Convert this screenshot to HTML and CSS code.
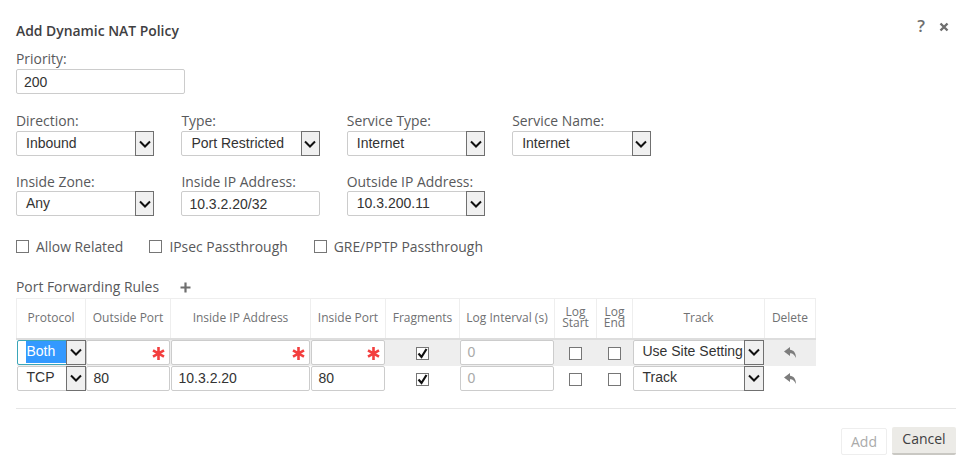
FILE: index.html
```html
<!DOCTYPE html>
<html lang="en">
<head>
  <meta charset="UTF-8">
  <title>Add Dynamic NAT Policy</title>
  <link rel="stylesheet" href="styles.css">
</head>
<body>
  <div class="dialog">
    <div class="head">
      <h1>Add Dynamic NAT Policy</h1>
      <div class="head-icons">
        <span class="help">?</span>
        <svg class="close" width="10" height="10" viewBox="0 0 10 10"><path d="M1.500 1.500l7 7M8.500 1.500l-7 7" stroke="#6f6f6f" stroke-width="2.400" fill="none"/></svg>
      </div>
    </div>

    <div class="row row-priority">
      <div class="field wide">
        <label>Priority:</label>
        <div class="input">200</div>
      </div>
    </div>

    <div class="row row-second">
      <div class="field">
        <label>Direction:</label>
        <div class="select"><span class="val">Inbound</span><span class="arrow"><svg width="12" height="8" viewBox="0 0 12 8"><path d="M1 1.500l5 5 5-5" stroke="#111" stroke-width="2" fill="none"/></svg></span></div>
      </div>
      <div class="field">
        <label>Type:</label>
        <div class="select"><span class="val">Port Restricted</span><span class="arrow"><svg width="12" height="8" viewBox="0 0 12 8"><path d="M1 1.500l5 5 5-5" stroke="#111" stroke-width="2" fill="none"/></svg></span></div>
      </div>
      <div class="field">
        <label>Service Type:</label>
        <div class="select"><span class="val">Internet</span><span class="arrow"><svg width="12" height="8" viewBox="0 0 12 8"><path d="M1 1.500l5 5 5-5" stroke="#111" stroke-width="2" fill="none"/></svg></span></div>
      </div>
      <div class="field">
        <label>Service Name:</label>
        <div class="select"><span class="val">Internet</span><span class="arrow"><svg width="12" height="8" viewBox="0 0 12 8"><path d="M1 1.500l5 5 5-5" stroke="#111" stroke-width="2" fill="none"/></svg></span></div>
      </div>
    </div>

    <div class="row row-third">
      <div class="field">
        <label>Inside Zone:</label>
        <div class="select"><span class="val">Any</span><span class="arrow"><svg width="12" height="8" viewBox="0 0 12 8"><path d="M1 1.500l5 5 5-5" stroke="#111" stroke-width="2" fill="none"/></svg></span></div>
      </div>
      <div class="field">
        <label>Inside IP Address:</label>
        <div class="input">10.3.2.20/32</div>
      </div>
      <div class="field">
        <label>Outside IP Address:</label>
        <div class="select"><span class="val">10.3.200.11</span><span class="arrow"><svg width="12" height="8" viewBox="0 0 12 8"><path d="M1 1.500l5 5 5-5" stroke="#111" stroke-width="2" fill="none"/></svg></span></div>
      </div>
    </div>

    <div class="checks">
      <div class="check-item"><span class="box"></span>Allow Related</div>
      <div class="check-item"><span class="box"></span>IPsec Passthrough</div>
      <div class="check-item"><span class="box"></span>GRE/PPTP Passthrough</div>
    </div>

    <div class="rules-title">
      <span>Port Forwarding Rules</span>
      <svg width="11" height="11" viewBox="0 0 11 11"><path d="M5.500 0.500v10M0.500 5.500h10" stroke="#6f6f6f" stroke-width="2.200" fill="none"/></svg>
    </div>

    <table class="rules">
      <colgroup>
        <col class="c-proto"><col class="c-oport"><col class="c-ip"><col class="c-iport"><col class="c-frag">
        <col class="c-int"><col class="c-ls"><col class="c-le"><col class="c-track"><col class="c-del">
      </colgroup>
      <thead>
        <tr>
          <th>Protocol</th><th>Outside Port</th><th>Inside IP Address</th><th>Inside Port</th><th>Fragments</th>
          <th>Log Interval (s)</th><th class="two">Log<br>Start</th><th class="two">Log<br>End</th><th>Track</th><th>Delete</th>
        </tr>
      </thead>
      <tbody>
        <tr class="active">
          <td><div class="select cell-select focus"><span class="val"><span class="picked">Both</span></span><span class="arrow"><svg width="12" height="8" viewBox="0 0 12 8"><path d="M1 1.500l5 5 5-5" stroke="#111" stroke-width="2" fill="none"/></svg></span></div></td>
          <td><div class="input cell-input"><svg class="req" width="13" height="13" viewBox="0 0 13 13"><path d="M6.500 0v13M1 3.300l11 6.400M12 3.300L1 9.700" stroke="#f33f3f" stroke-width="2.600" fill="none"/></svg></div></td>
          <td><div class="input cell-input"><svg class="req" width="13" height="13" viewBox="0 0 13 13"><path d="M6.500 0v13M1 3.300l11 6.400M12 3.300L1 9.700" stroke="#f33f3f" stroke-width="2.600" fill="none"/></svg></div></td>
          <td><div class="input cell-input"><svg class="req" width="13" height="13" viewBox="0 0 13 13"><path d="M6.500 0v13M1 3.300l11 6.400M12 3.300L1 9.700" stroke="#f33f3f" stroke-width="2.600" fill="none"/></svg></div></td>
          <td class="mid"><span class="box on"><svg width="13" height="13" viewBox="0 0 13 13"><path d="M2.500 6.500l3 3.500 5-8" stroke="#111" stroke-width="2.200" fill="none"/></svg></span></td>
          <td><div class="input cell-input off">0</div></td>
          <td class="mid"><span class="box"></span></td>
          <td class="mid"><span class="box"></span></td>
          <td><div class="select cell-select"><span class="val">Use Site Setting</span><span class="arrow"><svg width="12" height="8" viewBox="0 0 12 8"><path d="M1 1.500l5 5 5-5" stroke="#111" stroke-width="2" fill="none"/></svg></span></div></td>
          <td class="mid"><svg class="undo" width="12" height="11" viewBox="0 0 12 11"><path d="M6 0L0 4.500 6 9V6.200c2.500-.2 4.500 1.300 6 4.800 0-5-2.500-8-6-8.200z" fill="#7d7d7d"/></svg></td>
        </tr>
        <tr>
          <td><div class="select cell-select"><span class="val">TCP</span><span class="arrow"><svg width="12" height="8" viewBox="0 0 12 8"><path d="M1 1.500l5 5 5-5" stroke="#111" stroke-width="2" fill="none"/></svg></span></div></td>
          <td><div class="input cell-input">80</div></td>
          <td><div class="input cell-input">10.3.2.20</div></td>
          <td><div class="input cell-input">80</div></td>
          <td class="mid"><span class="box on"><svg width="13" height="13" viewBox="0 0 13 13"><path d="M2.500 6.500l3 3.500 5-8" stroke="#111" stroke-width="2.200" fill="none"/></svg></span></td>
          <td><div class="input cell-input off">0</div></td>
          <td class="mid"><span class="box"></span></td>
          <td class="mid"><span class="box"></span></td>
          <td><div class="select cell-select"><span class="val">Track</span><span class="arrow"><svg width="12" height="8" viewBox="0 0 12 8"><path d="M1 1.500l5 5 5-5" stroke="#111" stroke-width="2" fill="none"/></svg></span></div></td>
          <td class="mid"><svg class="undo" width="12" height="11" viewBox="0 0 12 11"><path d="M6 0L0 4.500 6 9V6.200c2.500-.2 4.500 1.300 6 4.800 0-5-2.500-8-6-8.200z" fill="#7d7d7d"/></svg></td>
        </tr>
      </tbody>
    </table>

    <div class="foot">
      <button class="btn-add">Add</button>
      <button class="btn-cancel">Cancel</button>
    </div>
  </div>
</body>
</html>
```

FILE: styles.css
```css
* { box-sizing: border-box; margin: 0; padding: 0; }
html, body { height: 100%; overflow: hidden; }
body {
  background: #fff;
  font-family: "Open Sans", Arial, sans-serif;
  font-size: 13.9px;
  color: #58595b;
}
.dialog { padding: 21px 15px 0 16px; }
.head {
  display: flex;
  justify-content: space-between;
  align-items: flex-start;
  height: 20px;
}
h1 {
  font-size: 13.9px;
  font-weight: 600;
  line-height: 20px;
  color: #3f4042;
}
.head-icons {
  display: flex;
  align-items: center;
  gap: 14px;
  margin-top: -4px;
  padding-right: 7px;
}
.help { font-size: 17px; font-weight: 600; line-height: 18px; color: #6f6f6f; }
.close { margin-top: 2px; }

.row { display: flex; gap: 27px; }
.row-priority { margin-top: 8px; }
.row-second { margin-top: 17px; }
.row-third { margin-top: 15px; }
.field { width: 138.4px; }
.field.wide { width: 169px; }
label { display: block; height: 20px; line-height: 19px; }
.row-third label { line-height: 21px; }

.input, .select {
  height: 25px;
  border: 1px solid #ccc;
  border-radius: 2px;
  background: #fff;
  font-family: "Liberation Sans", Arial, sans-serif;
  font-size: 14px;
  color: #333;
  line-height: 24px;
}
.input { padding-left: 7px; }
.select { display: flex; line-height: 23px; }
.select .val { flex: 1; padding-left: 9px; white-space: nowrap; overflow: hidden; }
.arrow {
  width: 19px;
  margin: -1px -1px -1px 0;
  display: flex;
  align-items: center;
  justify-content: center;
  background: #f0f0f0;
  border: 1px solid #707070;
}
.checks { display: flex; margin-top: 19px; height: 22px; align-items: center; }
.check-item { display: flex; align-items: center; margin-right: 26px; }
.box {
  display: inline-block;
  width: 13px;
  height: 13px;
  border: 1px solid #767676;
  background: #fff;
  vertical-align: middle;
}
.check-item .box { margin-right: 7px; }
.box.on { position: relative; }
.box.on svg { position: absolute; left: -1px; top: -1px; }

.rules-title {
  display: flex;
  align-items: center;
  gap: 21px;
  margin-top: 19px;
  height: 20px;
}
.rules-title svg { margin-top: 2px; }

.rules {
  border-collapse: collapse;
  table-layout: fixed;
  width: 799px;
  margin-top: 2px;
}
.c-proto { width: 69px; }
.c-oport { width: 85px; }
.c-ip { width: 140px; }
.c-iport { width: 75px; }
.c-frag { width: 74px; }
.c-int { width: 95px; }
.c-ls { width: 42px; }
.c-le { width: 36px; }
.c-track { width: 132px; }
.c-del { width: 51px; }
.rules th {
  height: 40px;
  padding-bottom: 2px;
  border: 1px solid #eee;
  border-bottom: 2px solid #ddd;
  font-size: 12px;
  font-weight: 400;
  color: #707173;
  text-align: center;
  white-space: nowrap;
}
.rules th.two { line-height: 11px; }
.rules td { height: 26px; padding: 0 1px 1px 0; }
.rules td:first-child { padding-right: 0; }
.rules tr.active td { background: #eee; }
.rules .mid { text-align: center; padding: 0; }
.rules .mid .box { margin-top: -2px; }
.cell-input { position: relative; height: 25px; padding-left: 7px; line-height: 22px; }
.cell-input.off { color: #aaa; }
.cell-select { height: 25px; line-height: 21px; }
.cell-select .val { padding-left: 9px; }
.cell-select .arrow { width: 20px; }
.focus { border-color: #3aa6b8; }
.picked { background: #3399ff; color: #fff; display: inline-block; height: 22px; line-height: 21px; padding: 0 9px 0 1px; margin-left: -1px; min-width: 40px; }
.req { position: absolute; right: 4px; top: 6px; }
.undo { margin-top: 4px; }

.foot {
  display: flex;
  justify-content: flex-end;
  align-items: flex-start;
  gap: 5px;
  margin-top: 16px;
  padding-top: 18px;
  border-top: 1px solid #e6e6e6;
}
button {
  font-family: "Open Sans", Arial, sans-serif;
  font-size: 14px;
  border-radius: 2px;
}
.btn-add {
  width: 46px;
  height: 27px;
  margin-top: 1px;
  background: #fff;
  border: 1px solid #eee;
  color: #aaa;
}
.btn-cancel {
  width: 64px;
  height: 28px;
  padding-bottom: 2px;
  background: #ecebe7;
  border: none;
  border-bottom: 2px solid #c9c8c3;
  color: #3f4042;
}
```
